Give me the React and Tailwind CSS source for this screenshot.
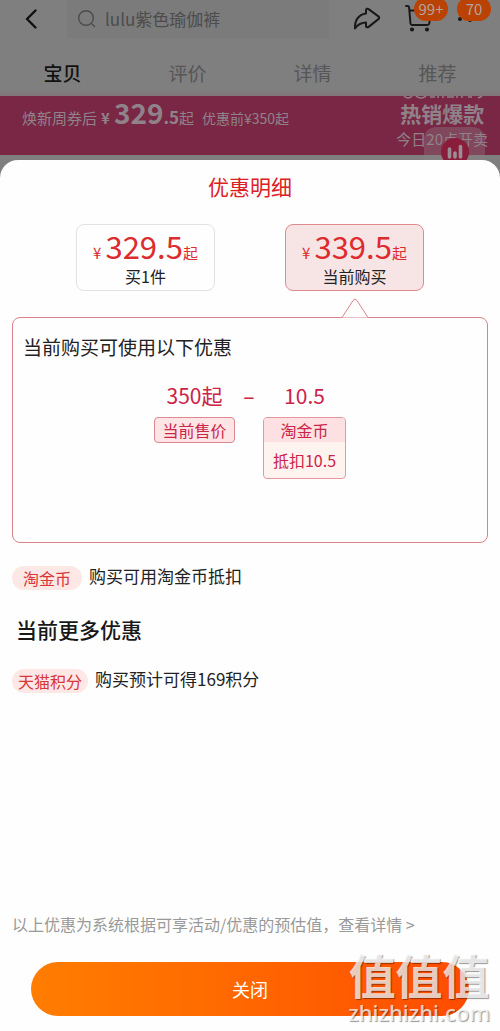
const tabs = ['宝贝', '评价', '详情', '推荐'];

function BackIcon() {
  return (
    <svg viewBox="0 0 14 20" className="h-5 w-[14px]" fill="none" stroke="#111" strokeWidth="2.4" strokeLinecap="round" strokeLinejoin="round">
      <path d="M11.500 1.500 3 10l8.500 8.500" />
    </svg>
  );
}

function SearchIcon() {
  return (
    <svg viewBox="0 0 20 20" className="h-5 w-5 shrink-0" fill="none" stroke="#4c4c4c" strokeWidth="1.4" strokeLinecap="round">
      <circle cx="9" cy="9" r="7.3" />
      <path d="m15 15 2.6 2.6" />
    </svg>
  );
}

function ShareIcon() {
  return (
    <svg viewBox="0 0 28 24" className="h-6 w-7" fill="none" stroke="#181818" strokeWidth="2" strokeLinejoin="round" strokeLinecap="round">
      <path d="M13 3.200c0-1.500 1.500-2 2.600-1.100l9.800 7.300c1 .8 1 1.900 0 2.700l-9.800 7.800c-1.100.9-2.600.4-2.600-1v-3.300C8.500 15.600 5 17.500 2 21.500 1.500 14 5 7.700 13 6.500z" />
    </svg>
  );
}

function CartIcon() {
  return (
    <svg viewBox="0 0 28 28" className="h-7 w-7" fill="none" stroke="#181818" strokeWidth="2" strokeLinejoin="round" strokeLinecap="round">
      <path d="M1 1h1.500c1 0 1.500.6 1.600 1.500l1.400 16c.1 1 .7 1.500 1.700 1.500H22c1.200 0 1.900-.5 2.200-1.600L26 9M5 5.500h5" />
      <circle cx="7" cy="24.500" r="1.100" fill="#181818" />
      <circle cx="22" cy="24.500" r="1.100" fill="#181818" />
    </svg>
  );
}

function Header() {
  return (
    <header className="bg-linear-to-b from-[#7f7f7f] from-92% to-[#82757a]">
      <div className="flex h-[38px] items-center">
        <button aria-label="返回" className="ml-6 flex w-[43px]"><BackIcon /></button>
        <label className="flex h-[38px] min-w-0 flex-1 items-center gap-2 bg-[#7b7b7b] pl-[10px]">
          <SearchIcon />
          <input aria-label="搜索" defaultValue="lulu紫色瑜伽裤" className="w-full min-w-0 bg-transparent text-[17px] leading-6 text-[#4c4c4c] outline-none" />
        </label>
        <div className="flex w-[171px] shrink-0 items-center">
          <button aria-label="分享" className="ml-6"><ShareIcon /></button>
          <button aria-label="购物车" className="relative ml-6">
            <CartIcon />
            <span className="absolute -top-2 left-[9px] flex h-6 w-[34px] items-center justify-center rounded-full bg-[#b94204] text-[15px] leading-4 text-[#b0a59f]">99+</span>
          </button>
          <button aria-label="更多" className="relative ml-6 h-7 w-9">
            <svg viewBox="0 0 36 28" className="h-7 w-9" fill="#181818">
              <circle cx="3" cy="14" r="2" />
              <circle cx="13" cy="15" r="2" />
            </svg>
            <span className="absolute -top-2 left-0 flex h-6 w-[34px] items-center justify-center rounded-full bg-[#b94204] text-[15px] leading-4 text-[#b0a59f]">70</span>
          </button>
        </div>
      </div>
      <nav className="grid h-[58px] grid-cols-4 items-center pt-3">
        {tabs.map((t, i) => (
          <a key={t} href="#" className={i === 0 ? 'text-center text-[19px] font-medium leading-6 text-[#111]' : 'text-center text-[19px] leading-6 text-[#565656]'}>{t}</a>
        ))}
      </nav>
    </header>
  );
}

function Banner() {
  return (
    <section className="relative flex h-[59px] justify-between bg-[#7a2746] pr-3 pl-[22px] text-[#8f8389]">
      <p className="flex h-8 items-baseline text-[15px] leading-8 whitespace-nowrap">
        <span>焕新周券后</span>
        <span className="ml-1 font-bold">¥</span>
        <strong className="ml-1 text-[28px] leading-8">329</strong>
        <strong className="text-[17px]">.5</strong>
        <span>起</span>
        <span className="ml-2 text-[14px]">优惠前¥350起</span>
      </p>
      <div className="flex flex-col items-center pt-[5px] whitespace-nowrap">
        <strong className="text-[21px] leading-6">热销爆款</strong>
        <span className="text-[15px] leading-7">今日20点开卖</span>
      </div>
      <svg viewBox="0 0 84 3" className="absolute top-0 right-[14px] h-[3px] w-[84px]" fill="none" stroke="#8f8389" strokeWidth="1.500">
        <path d="M2 0q4 4 8 0M14 0q5 4 10 0M28 1h5M36 0v2M41 0v2M45 1h7M55 0v2M60 0v2M66 1h4M76 2l4-2" />
      </svg>
      <button aria-label="数据" className="absolute top-[31px] right-[15px] flex h-[50px] w-[61px] items-start justify-center rounded-xl bg-[#8f8389]/35 pt-[10px]">
        <svg viewBox="0 0 30 30" className="h-[30px] w-[30px]">
          <circle cx="15" cy="15" r="14" fill="#8a1c3c" />
          <g stroke="#9a8e93" strokeWidth="3.600" strokeLinecap="round">
            <path d="M9.500 12v8M15 16v4M20.500 9.500v10.500" />
          </g>
        </svg>
      </button>
    </section>
  );
}

function PriceCard({ price, label, active }) {
  return (
    <button className={active
      ? 'relative flex h-[67px] w-[139px] flex-col items-center rounded-lg border border-[#e08a90] bg-[#f7e5e6] pt-[5px]'
      : 'relative flex h-[67px] w-[139px] flex-col items-center rounded-lg border border-[#e2e2e2] pt-[5px]'}>
      <span className="flex h-9 items-baseline text-[#dc2c2f]">
        <span className="mr-1 text-[15px] leading-4">¥</span>
        <span className="text-[31px] leading-8">{price}</span>
        <span className="text-[15px] leading-4">起</span>
      </span>
      <span className="text-[16px] leading-5 text-[#222]">{label}</span>
      {active && (
        <svg viewBox="0 0 28 20" className="absolute top-[73px] left-1/2 z-10 h-5 w-7 -translate-x-1/2" fill="#fefefe" stroke="#dc828a">
          <path d="M0 19.500h1L12 2.500q2-3 4 0L27 19.500h1" />
        </svg>
      )}
    </button>
  );
}

function Benefit({ tag, wide, children }) {
  return (
    <div className="flex h-6 items-start gap-[7px]">
      <span className={wide
        ? 'rounded-full bg-[#fde8e5] px-[6px] text-[16px] leading-6 text-[#d9363a]'
        : 'rounded-full bg-[#fde8e5] px-[11px] text-[16px] leading-6 text-[#d9363a]'}>{tag}</span>
      <span className="text-[17px] leading-5 text-[#222]">{children}</span>
    </div>
  );
}

export default function App() {
  return (
    <div className="relative flex min-h-screen flex-col bg-[#7f7f7f] font-['Noto_Sans_CJK_SC',sans-serif]">
      <Header />
      <Banner />
      <main className="relative mt-[5px] flex flex-1 flex-col rounded-t-[18px] bg-[#fefefe] px-3 pt-3">
        <h1 className="text-center text-[21px] leading-7 text-[#dc2024]">优惠明细</h1>
        <div className="mt-6 flex justify-center gap-[70px]">
          <PriceCard price="329.5" label="买1件" />
          <PriceCard price="339.5" label="当前购买" active />
        </div>
        <section className="mt-[26px] h-[226px] rounded-lg border border-[#dc828a] px-[10px] pt-[17px]">
          <h2 className="text-[19px] leading-6 text-[#222]">当前购买可使用以下优惠</h2>
          <div className="mt-5 flex items-start justify-center text-[#cc2348]">
            <div className="flex w-[81px] flex-col items-center gap-[6px]">
              <span className="text-[21px] leading-8">350起</span>
              <span className="w-full rounded border border-[#de8791] bg-[#fde4e5] text-center text-[16px] leading-6">当前售价</span>
            </div>
            <span className="w-7 text-center text-[21px] font-medium leading-8">–</span>
            <div className="flex w-[83px] flex-col items-center gap-[6px]">
              <span className="text-[21px] leading-8">10.5</span>
              <div className="w-full overflow-hidden rounded border border-[#e5979d] bg-[#fff3f0] text-center text-[16px]">
                <div className="bg-[#fde1e2] leading-6">淘金币</div>
                <div className="leading-9">抵扣10.5</div>
              </div>
            </div>
          </div>
        </section>
        <div className="mt-[23px]">
          <Benefit tag="淘金币">购买可用淘金币抵扣</Benefit>
        </div>
        <h2 className="mt-[25px] ml-1 text-[21px] font-medium leading-7 text-[#181818]">当前更多优惠</h2>
        <div className="mt-[26px]">
          <Benefit tag="天猫积分" wide>购买预计可得169积分</Benefit>
        </div>
        <footer className="relative mt-auto pb-[15px]">
          <a href="#" className="block text-[16px] leading-6 whitespace-nowrap text-[#999]">以上优惠为系统根据可享活动/优惠的预估值，查看详情 &gt;</a>
          <button className="mx-[19px] mt-[26px] block h-[54px] w-[calc(100%-38px)] rounded-full bg-linear-to-r from-[#ff7d00] to-[#ff4b00] text-[18px] text-white">关闭</button>
          <div className="pointer-events-none absolute -right-[2px] bottom-[7px] flex flex-col items-center text-white/75 [text-shadow:1px_1px_1px_#00000066]">
            <span className="text-[47px] font-bold leading-[52px]">值值值</span>
            <span className="font-['Noto_Sans',sans-serif] text-[22px] font-medium leading-6">zhizhizhi.com</span>
          </div>
        </footer>
      </main>
    </div>
  );
}
